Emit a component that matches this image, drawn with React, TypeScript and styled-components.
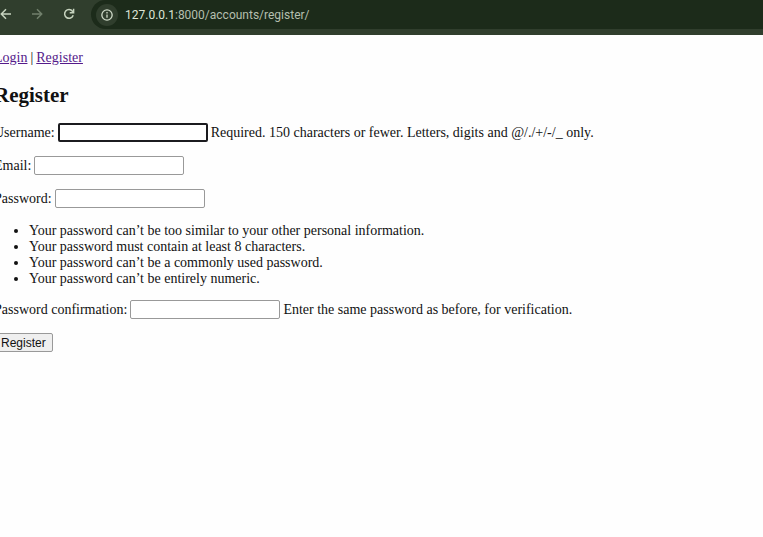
import React from "react";
import styled, { createGlobalStyle } from "styled-components";

const GlobalStyle = createGlobalStyle`
  * { box-sizing: border-box; }
  body {
    margin: 0;
    background: #fefefe;
    color: #111;
    font: 14px/16px "Liberation Serif", "Times New Roman", serif;
    overflow-x: hidden;
  }
`;

const BrowserBar = styled.header`
  display: flex;
  align-items: flex-start;
  height: 35px;
  background: #303e2d;
`;

const NavButtons = styled.div`
  display: flex;
  flex: none;
  align-items: center;
  gap: 16px;
  width: 94px;
  height: 28px;
  margin-left: -3px;
`;

const NavButton = styled.button<{ $dim?: boolean }>`
  display: flex;
  padding: 0;
  border: 0;
  background: none;
  color: ${(p) => (p.$dim ? "#71806c" : "#c6d3be")};
`;

const AddressBar = styled.div`
  display: flex;
  flex: 1;
  align-items: center;
  gap: 7px;
  height: 29px;
  padding-left: 5px;
  border-radius: 15px 0 0 15px;
  background: #1c2b1a;
`;

const SiteInfo = styled.button`
  display: flex;
  align-items: center;
  justify-content: center;
  width: 22px;
  height: 22px;
  padding: 0;
  border: 0;
  border-radius: 50%;
  background: #303e2d;
  color: #d0dbc9;
`;

const Url = styled.span`
  color: #b4bfae;
  font: 12px/16px Roboto, "Noto Sans", sans-serif;
`;

const Host = styled.span`
  color: #dce5d6;
`;

const Page = styled.main`
  margin-left: -6px;
  padding-top: 15px;
`;

const Links = styled.nav`
  display: flex;
  gap: 3px;
`;

const PageLink = styled.a`
  color: #551a8b;

  &:visited {
    color: #551a8b;
  }
`;

const Title = styled.h2`
  margin: 17px 0 16px;
  font-size: 21px;
  line-height: 24px;
`;

const Form = styled.form`
  display: flex;
  flex-direction: column;
  align-items: flex-start;
  gap: 14px;
`;

const Row = styled.div`
  display: flex;
  align-items: center;
  gap: 3px;
  height: 19px;
  white-space: nowrap;
`;

const TextInput = styled.input<{ $active?: boolean }>`
  width: 150px;
  height: 19px;
  padding: 1px 2px;
  border: ${(p) => (p.$active ? "2px solid #1b1b1f" : "1px solid #999")};
  border-radius: 2px;
  background: #fff;
  font: 12px "Liberation Sans", Arial, sans-serif;
  outline: none;
`;

const Rules = styled.ul`
  margin: 0 0 -1px;
  padding: 1px 0 0 35px;
`;

const Submit = styled.button`
  height: 19px;
  padding: 0 6px;
  border: 1px solid #999;
  border-radius: 2px;
  background: #efefef;
  color: #111;
  font: 12px "Liberation Sans", Arial, sans-serif;
`;

const rules = [
  "Your password can’t be too similar to your other personal information.",
  "Your password must contain at least 8 characters.",
  "Your password can’t be a commonly used password.",
  "Your password can’t be entirely numeric.",
];

type FieldProps = {
  id: string;
  label: string;
  type?: string;
  help?: string;
  active?: boolean;
};

function Field({ id, label, type = "text", help, active }: FieldProps) {
  return (
    <Row>
      <label htmlFor={id}>{label}</label>
      <TextInput id={id} name={id} type={type} $active={active} />
      {help && <span>{help}</span>}
    </Row>
  );
}

function Icon({ children, size = 16 }: { children: React.ReactNode; size?: number }) {
  return (
    <svg width={size} height={size} viewBox="0 0 16 16" fill="none" stroke="currentColor" strokeWidth="1.5" aria-hidden="true">
      {children}
    </svg>
  );
}

export default function App() {
  return (
    <>
      <GlobalStyle />
      <BrowserBar>
        <NavButtons>
          <NavButton aria-label="Back">
            <Icon><path d="M14 8H4.5M9 3.3 4.3 8 9 12.7" /></Icon>
          </NavButton>
          <NavButton $dim aria-label="Forward">
            <Icon><path d="M3 8h9.5M8 3.3 12.7 8 8 12.7" /></Icon>
          </NavButton>
          <NavButton aria-label="Reload">
            <Icon>
              <path d="M12.2 9.3A4.4 4.4 0 1 1 11.5 5.2L12.4 6.2" />
              <path d="M12.6 2.8v4H8.7" />
            </Icon>
          </NavButton>
        </NavButtons>
        <AddressBar>
          <SiteInfo aria-label="View site information">
            <Icon size={14}>
              <circle cx="8" cy="8" r="5.9" />
              <path d="M8 7.3v3.8M8 4.6v1.6" />
            </Icon>
          </SiteInfo>
          <Url><Host>127.0.0.1</Host>:8000/accounts/register/</Url>
        </AddressBar>
      </BrowserBar>
      <Page>
        <Links>
          <PageLink href="#login">Login</PageLink>
          <span>|</span>
          <PageLink href="#register">Register</PageLink>
        </Links>
        <Title>Register</Title>
        <Form>
          <Field id="username" label="Username:" active help="Required. 150 characters or fewer. Letters, digits and @/./+/-/_ only." />
          <Field id="email" label="Email:" type="email" />
          <Field id="password1" label="Password:" type="password" />
          <Rules>
            {rules.map((rule) => <li key={rule}>{rule}</li>)}
          </Rules>
          <Field id="password2" label="Password confirmation:" type="password" help="Enter the same password as before, for verification." />
          <Submit type="button">Register</Submit>
        </Form>
      </Page>
    </>
  );
}
